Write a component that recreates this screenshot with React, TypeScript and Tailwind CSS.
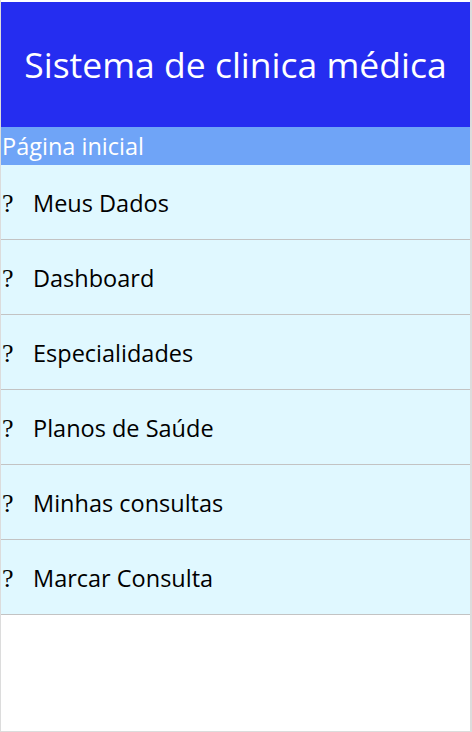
import React from 'react';

const items = [
  'Meus Dados',
  'Dashboard',
  'Especialidades',
  'Planos de Saúde',
  'Minhas consultas',
  'Marcar Consulta',
];

const App: React.FC = () => {
  return (
    <div className="h-[732px] w-[472px] border-l border-r-2 border-b border-[#dcdcdc] bg-white pt-[2px] font-['Open_Sans',sans-serif]">
      {/* Header */}
      <div className="flex h-[125px] items-center justify-center bg-[#252df0]">
        <h1 className="text-[35.5px] text-white">Sistema de clinica médica</h1>
      </div>

      <div className="flex h-[38px] items-center bg-[#6fa4f7] pl-[1px] pt-[1px] text-[23.5px] text-white">
        Página inicial
      </div>

      {/* Menu */}
      <ul>
        {items.map((item) => (
          <li
            key={item}
            className="flex h-[75px] items-center border-b border-[#c3c3c3] bg-[#e0f8ff] pt-[3px] text-[23.5px] text-black"
          >
            <span className="w-[32px] pl-[1px] font-['Liberation_Serif',serif] text-[26px]">?</span>
            {item}
          </li>
        ))}
      </ul>
    </div>
  );
};

export default App;
